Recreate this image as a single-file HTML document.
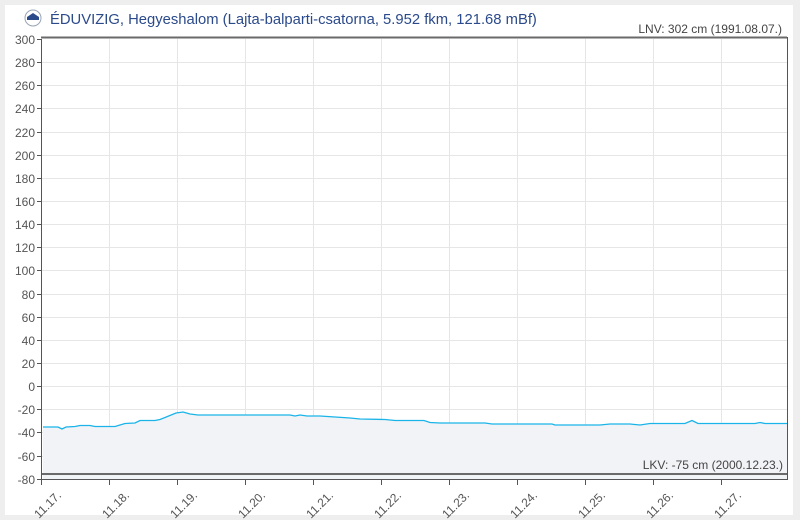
<!DOCTYPE html>
<html><head><meta charset="utf-8"><style>
html,body{margin:0;padding:0;background:#eeeeee;width:800px;height:520px;overflow:hidden}
svg{display:block}
text{font-family:"Liberation Sans",sans-serif}
</style></head><body>
<svg width="800" height="520" xmlns="http://www.w3.org/2000/svg">
<rect x="0" y="0" width="800" height="520" fill="#eeeeee"/>
<rect x="5" y="5" width="788" height="510" fill="#ffffff"/>
<circle cx="33" cy="18" r="8" fill="#fff" stroke="#9aa3b5" stroke-width="1"/>
<path d="M27 17 L33 13 L39 17 Z" fill="#2b4a8b"/>
<rect x="27" y="17" width="12" height="3" fill="#2b4a8b"/>
<text x="50" y="24" font-size="14.8" fill="#2b4a8b">ÉDUVIZIG, Hegyeshalom (Lajta-balparti-csatorna, 5.952 fkm, 121.68 mBf)</text>
<text x="782" y="33" font-size="12" fill="#444" text-anchor="end">LNV: 302 cm (1991.08.07.)</text>
<g stroke="#e6e6e6" stroke-width="1">
<line x1="41" x2="787" y1="62.5" y2="62.5"/><line x1="41" x2="787" y1="85.5" y2="85.5"/><line x1="41" x2="787" y1="108.5" y2="108.5"/><line x1="41" x2="787" y1="132.5" y2="132.5"/><line x1="41" x2="787" y1="155.5" y2="155.5"/><line x1="41" x2="787" y1="178.5" y2="178.5"/><line x1="41" x2="787" y1="201.5" y2="201.5"/><line x1="41" x2="787" y1="224.5" y2="224.5"/><line x1="41" x2="787" y1="247.5" y2="247.5"/><line x1="41" x2="787" y1="270.5" y2="270.5"/><line x1="41" x2="787" y1="294.5" y2="294.5"/><line x1="41" x2="787" y1="317.5" y2="317.5"/><line x1="41" x2="787" y1="340.5" y2="340.5"/><line x1="41" x2="787" y1="363.5" y2="363.5"/><line x1="41" x2="787" y1="386.5" y2="386.5"/><line x1="41" x2="787" y1="409.5" y2="409.5"/><line x1="41" x2="787" y1="432.5" y2="432.5"/><line x1="41" x2="787" y1="456.5" y2="456.5"/>
<line x1="109.5" x2="109.5" y1="39" y2="479"/><line x1="177.5" x2="177.5" y1="39" y2="479"/><line x1="245.5" x2="245.5" y1="39" y2="479"/><line x1="313.5" x2="313.5" y1="39" y2="479"/><line x1="381.5" x2="381.5" y1="39" y2="479"/><line x1="449.5" x2="449.5" y1="39" y2="479"/><line x1="517.5" x2="517.5" y1="39" y2="479"/><line x1="585.5" x2="585.5" y1="39" y2="479"/><line x1="653.5" x2="653.5" y1="39" y2="479"/><line x1="721.5" x2="721.5" y1="39" y2="479"/>
</g>
<path d="M43 427 L58 427 L62 429 L66 427 L75 426.5 L80 425.5 L90 425.5 L95 426.5 L115 426.5 L120 425 L125 423.5 L135 423 L140 420.5 L155 420.5 L160 419.5 L165 417.5 L176 413 L183 412 L190 414 L198 415 L290 415 L295 416 L300 415 L307 416 L320 416 L350 418 L360 419 L385 419.5 L395 420.5 L424 420.5 L430 422.5 L440 423 L485 423 L492 424 L552 424 L555 425 L600 425 L610 424 L630 424 L640 425 L650 423.5 L685 423.5 L692 420.5 L698 423.5 L755 423.5 L760 422.5 L765 423.5 L787 423.5 L787 479 L43 479 Z" fill="#f2f3f7"/>
<path d="M43 427 L58 427 L62 429 L66 427 L75 426.5 L80 425.5 L90 425.5 L95 426.5 L115 426.5 L120 425 L125 423.5 L135 423 L140 420.5 L155 420.5 L160 419.5 L165 417.5 L176 413 L183 412 L190 414 L198 415 L290 415 L295 416 L300 415 L307 416 L320 416 L350 418 L360 419 L385 419.5 L395 420.5 L424 420.5 L430 422.5 L440 423 L485 423 L492 424 L552 424 L555 425 L600 425 L610 424 L630 424 L640 425 L650 423.5 L685 423.5 L692 420.5 L698 423.5 L755 423.5 L760 422.5 L765 423.5 L787 423.5" fill="none" stroke="#1ab4e8" stroke-width="1.3"/>
<line x1="41" x2="787" y1="37.5" y2="37.5" stroke="#6a6a6a" stroke-width="2"/>
<line x1="41" x2="787" y1="474" y2="474" stroke="#6a6a6a" stroke-width="2"/>
<text x="783" y="469" font-size="12" fill="#444" text-anchor="end">LKV: -75 cm (2000.12.23.)</text>
<line x1="41.5" x2="41.5" y1="39" y2="480" stroke="#555" stroke-width="1"/>
<line x1="787.5" x2="787.5" y1="37" y2="480" stroke="#555" stroke-width="1"/>
<line x1="41" x2="788" y1="479.5" y2="479.5" stroke="#555" stroke-width="1"/>
<g stroke="#555" stroke-width="1">
<line x1="37" x2="41" y1="39.5" y2="39.5"/><line x1="37" x2="41" y1="62.5" y2="62.5"/><line x1="37" x2="41" y1="85.5" y2="85.5"/><line x1="37" x2="41" y1="108.5" y2="108.5"/><line x1="37" x2="41" y1="132.5" y2="132.5"/><line x1="37" x2="41" y1="155.5" y2="155.5"/><line x1="37" x2="41" y1="178.5" y2="178.5"/><line x1="37" x2="41" y1="201.5" y2="201.5"/><line x1="37" x2="41" y1="224.5" y2="224.5"/><line x1="37" x2="41" y1="247.5" y2="247.5"/><line x1="37" x2="41" y1="270.5" y2="270.5"/><line x1="37" x2="41" y1="294.5" y2="294.5"/><line x1="37" x2="41" y1="317.5" y2="317.5"/><line x1="37" x2="41" y1="340.5" y2="340.5"/><line x1="37" x2="41" y1="363.5" y2="363.5"/><line x1="37" x2="41" y1="386.5" y2="386.5"/><line x1="37" x2="41" y1="409.5" y2="409.5"/><line x1="37" x2="41" y1="432.5" y2="432.5"/><line x1="37" x2="41" y1="456.5" y2="456.5"/><line x1="37" x2="41" y1="479.5" y2="479.5"/>
<line x1="41.5" x2="41.5" y1="479" y2="485"/><line x1="109.5" x2="109.5" y1="479" y2="485"/><line x1="177.5" x2="177.5" y1="479" y2="485"/><line x1="245.5" x2="245.5" y1="479" y2="485"/><line x1="313.5" x2="313.5" y1="479" y2="485"/><line x1="381.5" x2="381.5" y1="479" y2="485"/><line x1="449.5" x2="449.5" y1="479" y2="485"/><line x1="517.5" x2="517.5" y1="479" y2="485"/><line x1="585.5" x2="585.5" y1="479" y2="485"/><line x1="653.5" x2="653.5" y1="479" y2="485"/><line x1="721.5" x2="721.5" y1="479" y2="485"/>
</g>
<g font-size="12" fill="#555" text-anchor="end">
<text x="35" y="44">300</text><text x="35" y="67">280</text><text x="35" y="90">260</text><text x="35" y="113">240</text><text x="35" y="137">220</text><text x="35" y="160">200</text><text x="35" y="183">180</text><text x="35" y="206">160</text><text x="35" y="229">140</text><text x="35" y="252">120</text><text x="35" y="275">100</text><text x="35" y="299">80</text><text x="35" y="322">60</text><text x="35" y="345">40</text><text x="35" y="368">20</text><text x="35" y="391">0</text><text x="35" y="414">-20</text><text x="35" y="437">-40</text><text x="35" y="461">-60</text><text x="35" y="484">-80</text>
</g>
<g font-size="12" fill="#555" text-anchor="end">
<text transform="translate(62,496) rotate(-45)">11.17.</text>
<text transform="translate(130,496) rotate(-45)">11.18.</text>
<text transform="translate(198,496) rotate(-45)">11.19.</text>
<text transform="translate(266,496) rotate(-45)">11.20.</text>
<text transform="translate(334,496) rotate(-45)">11.21.</text>
<text transform="translate(402,496) rotate(-45)">11.22.</text>
<text transform="translate(470,496) rotate(-45)">11.23.</text>
<text transform="translate(538,496) rotate(-45)">11.24.</text>
<text transform="translate(606,496) rotate(-45)">11.25.</text>
<text transform="translate(674,496) rotate(-45)">11.26.</text>
<text transform="translate(742,496) rotate(-45)">11.27.</text>
</g>
</svg>
</body></html>
